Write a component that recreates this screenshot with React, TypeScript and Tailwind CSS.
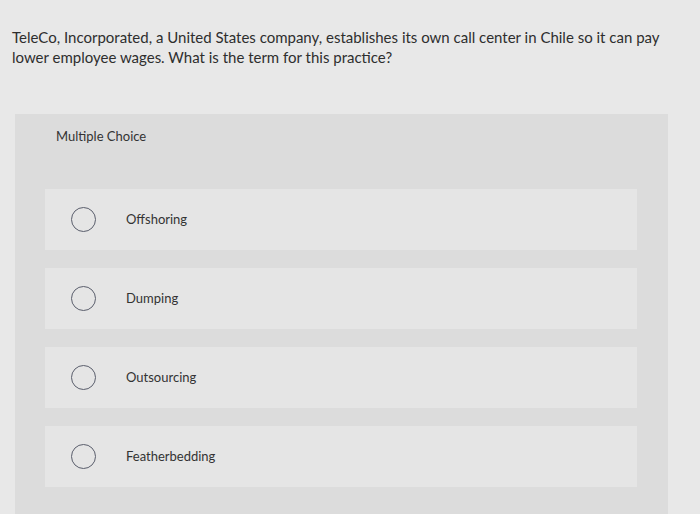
const options = ['Offshoring', 'Dumping', 'Outsourcing', 'Featherbedding'];

const Radio = () => (
  <span className="block h-[25px] w-[25px] shrink-0 rounded-full border-[1.5px] border-[#5a5e6c]" />
);

export default function App() {
  return (
    <div
      className="h-[514px] w-[700px] overflow-hidden bg-[#e8e8e8] text-[#2e2e2e]"
      style={{ fontFamily: 'Lato, "Open Sans", sans-serif' }}
    >
      <p className="pl-3 pr-6 pt-[27px] text-[15px] leading-[20px]">
        TeleCo, Incorporated, a United States company, establishes its own call center in Chile so it can pay
        lower employee wages. What is the term for this practice?
      </p>

      <section className="ml-[15px] mt-[47px] h-[420px] w-[653px] bg-[#dcdcdc] pt-[14px]">
        <h2 className="pl-[41px] text-[13px] leading-[16px] text-[#333]">Multiple Choice</h2>

        <ul className="ml-[30px] mt-[45px] flex w-[592px] flex-col gap-[18px]">
          {options.map((label) => (
            <li key={label} className="flex h-[61px] items-center gap-[30px] bg-[#e5e5e5] pl-[26px]">
              <Radio />
              <span className="text-[13px] text-[#333]">{label}</span>
            </li>
          ))}
        </ul>
      </section>
    </div>
  );
}
